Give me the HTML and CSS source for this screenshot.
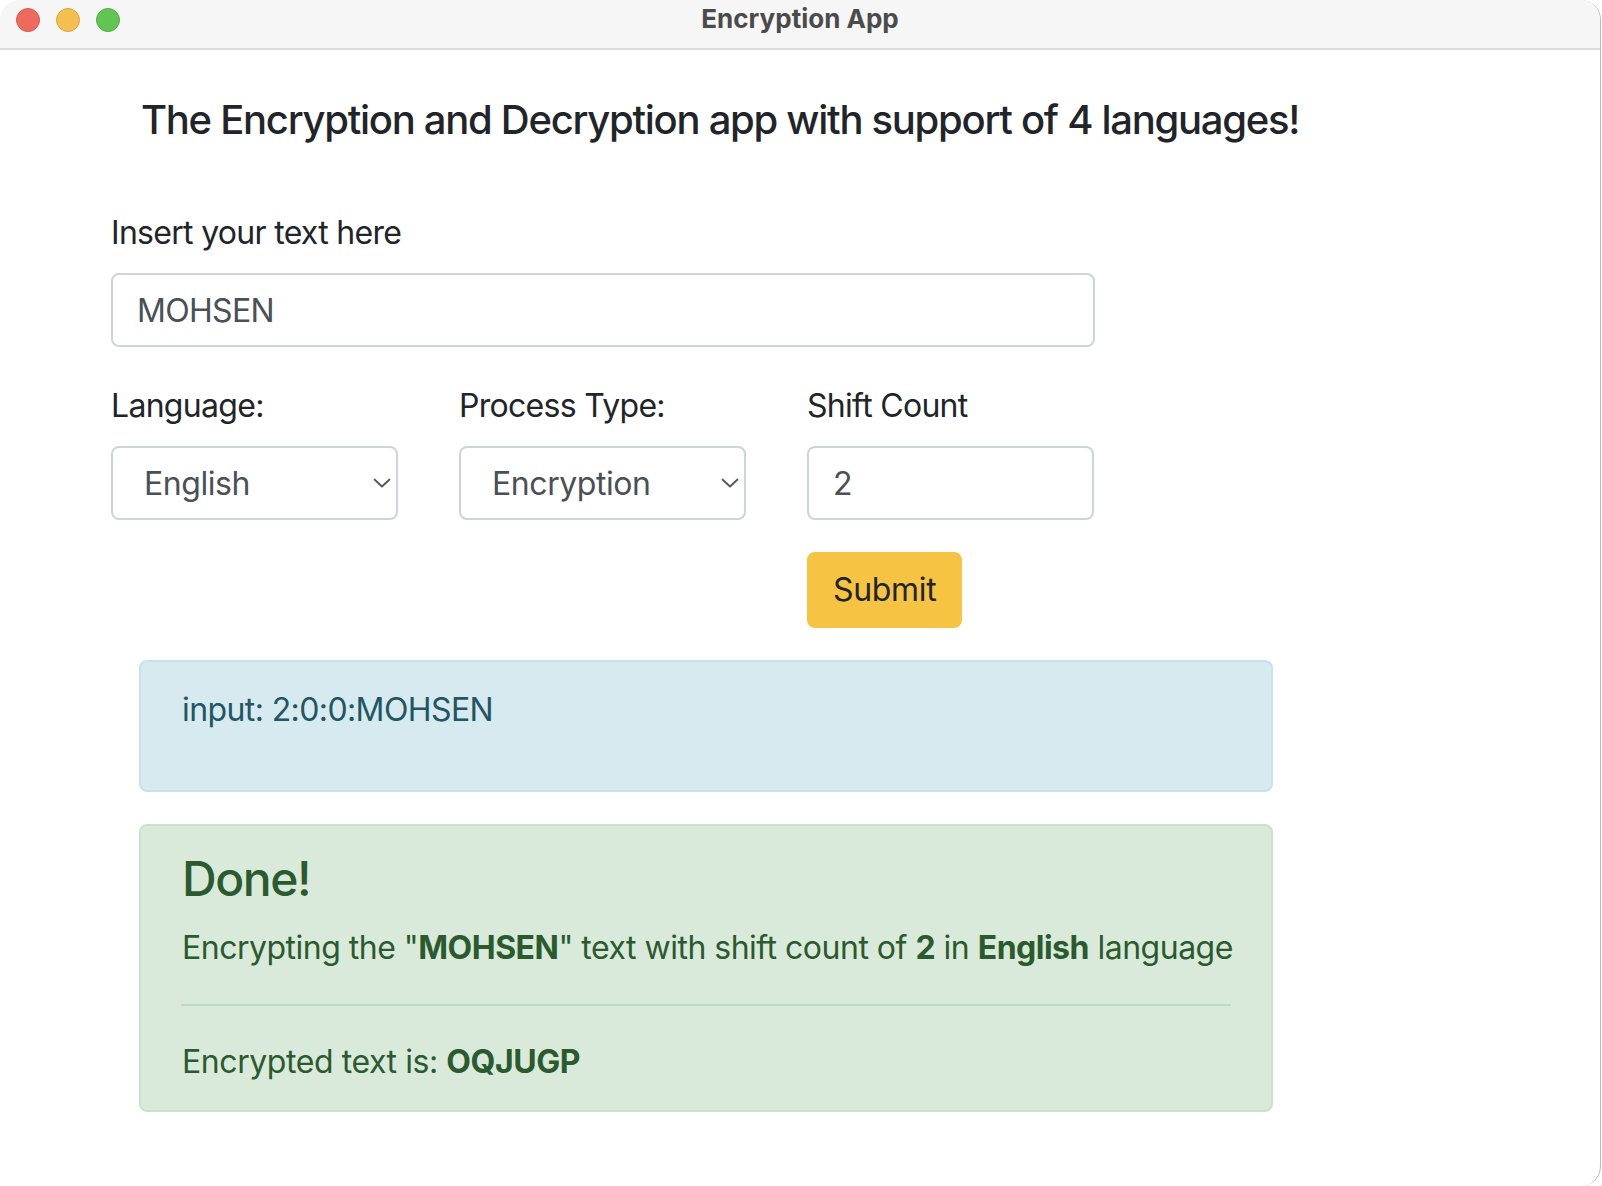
FILE: index.html
```html
<!DOCTYPE html>
<html lang="en">
<head>
<meta charset="utf-8">
<title>Encryption App</title>
<link rel="stylesheet" href="styles.css">
</head>
<body>
<div class="window">
  <header class="titlebar">
    <div class="lights">
      <span class="light red"></span>
      <span class="light yellow"></span>
      <span class="light green"></span>
    </div>
    <div class="title">Encryption App</div>
    <div></div>
  </header>
  <main class="content">
    <h5 class="heading">The Encryption and Decryption app with support of 4 languages!</h5>
    <form class="form">
      <div class="group">
        <label class="label">Insert your text here</label>
        <input class="control" type="text" value="MOHSEN">
      </div>
      <div class="row">
        <div class="col">
          <label class="label">Language:</label>
          <div class="select"><span>English</span><svg class="chev" width="18" height="10" viewBox="0 0 18 10"><path d="M1.5 1.5 L9 8.5 L16.5 1.5" fill="none" stroke="#555" stroke-width="1.8" stroke-linecap="round" stroke-linejoin="round"/></svg></div>
        </div>
        <div class="col">
          <label class="label">Process Type:</label>
          <div class="select"><span>Encryption</span><svg class="chev" width="18" height="10" viewBox="0 0 18 10"><path d="M1.5 1.5 L9 8.5 L16.5 1.5" fill="none" stroke="#555" stroke-width="1.8" stroke-linecap="round" stroke-linejoin="round"/></svg></div>
        </div>
        <div class="col">
          <label class="label">Shift Count</label>
          <input class="control" type="text" value="2">
          <button class="btn" type="button">Submit</button>
        </div>
      </div>
    </form>
    <div class="alert info">
      <p class="alert-p tight">input: 2:0:0:MOHSEN</p>
    </div>
    <div class="alert success">
      <h4 class="alert-heading">Done!</h4>
      <p class="alert-p one-line">Encrypting the "<b>MOHSEN</b>" text with shift count of <b>2</b> in <b>English</b> language</p>
      <hr class="rule">
      <p class="alert-p last">Encrypted text is: <b>OQJUGP</b></p>
    </div>
  </main>
</div>
</body>
</html>
```

FILE: styles.css
```css
* { box-sizing: border-box; }
html, body {
  margin: 0;
  padding: 0;
  background: #ffffff;
}
body {
  font-family: Inter, "Liberation Sans", sans-serif;
  color: #212529;
  width: 1602px;
  height: 1186px;
  overflow: hidden;
  letter-spacing: -0.43px;
}
.window {
  width: 1601px;
  height: 1186px;
  background: #fff;
  border-right: 1px solid #b9b9b9;
  border-radius: 20px 20px 20px 0;
  overflow: hidden;
}
.titlebar {
  height: 50px;
  background: #f6f6f6;
  border-bottom: 2px solid #dcdcdc;
  display: grid;
  grid-template-columns: 1fr auto 1fr;
  align-items: start;
}
.lights {
  display: flex;
  gap: 16px;
  padding: 8px 0 0 16px;
}
.light {
  width: 24px;
  height: 24px;
  border-radius: 50%;
  display: block;
}
.red { background: #ee6a5f; border: 1px solid #d9574c; }
.yellow { background: #f5bf4f; border: 1px solid #dca43a; }
.green { background: #61c554; border: 1px solid #4eab42; }
.title {
  font-weight: 700;
  font-size: 26px;
  line-height: 30px;
  padding-top: 4px;
  color: #4b4b4b;
  letter-spacing: 0;
}
.content {
  padding: 46px 0 0 111px;
}
.heading {
  margin: 0 0 65px 30px;
  font-size: 40px;
  line-height: 48px;
  font-weight: 500;
  color: #212529;
  letter-spacing: -1.28px;
}
.form {
  width: 984px;
  margin: 0 0 32px 0;
}
.group {
  margin-bottom: 35px;
}
.label {
  display: block;
  font-size: 32px;
  line-height: 48px;
  margin-bottom: 16px;
  color: #212529;
  letter-spacing: -0.7px;
}
.control {
  display: block;
  width: 100%;
  height: 74px;
  padding: 0 24px;
  font-family: inherit;
  font-size: 32px;
  letter-spacing: -0.7px;
  color: #495057;
  background: #fff;
  border: 2px solid #ced4da;
  border-radius: 8px;
  outline: none;
}
.row {
  display: grid;
  grid-template-columns: 287px 287px 287px;
  column-gap: 61px;
}
.col {
  display: flex;
  flex-direction: column;
  align-items: flex-start;
}
.select {
  width: 100%;
  height: 74px;
  display: flex;
  align-items: center;
  justify-content: space-between;
  padding: 0 5px 0 31px;
  font-size: 32px;
  color: #495057;
  border: 2px solid #ced4da;
  border-radius: 8px;
  background: #fff;
}
.chev { display: block; }
.btn {
  margin-top: 32px;
  font-family: inherit;
  font-size: 32px;
  letter-spacing: -0.32px;
  line-height: 48px;
  padding: 12px 24px;
  color: #212529;
  background: #f6c343;
  border: 2px solid #f6c343;
  border-radius: 8px;
}
.alert {
  margin: 0 0 32px 28px;
  width: 1134px;
  padding: 24px 38px 24px 41px;
  border: 2px solid transparent;
  border-radius: 8px;
}
.info {
  background: #d6eaef;
  border-color: #c6e3ea;
  color: #235563;
}
.success {
  background: #d9eadb;
  border-color: #c8e3cc;
  color: #2b5a2e;
}
.alert-p {
  margin: 0 0 32px 0;
  font-size: 32px;
  line-height: 48px;
}
.alert-p.tight { letter-spacing: -0.6px; }
.one-line {
  white-space: nowrap;
  letter-spacing: -0.5px;
}
.alert-p.last { margin-bottom: 0; }
.alert-p b { font-weight: 700; }
.alert-heading {
  margin: 0 0 16px 0;
  font-size: 48px;
  line-height: 57.6px;
  font-weight: 500;
  letter-spacing: -1.44px;
}
.rule {
  margin: 32px 2px 32px -1px;
  border: 0;
  border-top: 2px solid #bcdcc0;
  height: 0;
}
```
